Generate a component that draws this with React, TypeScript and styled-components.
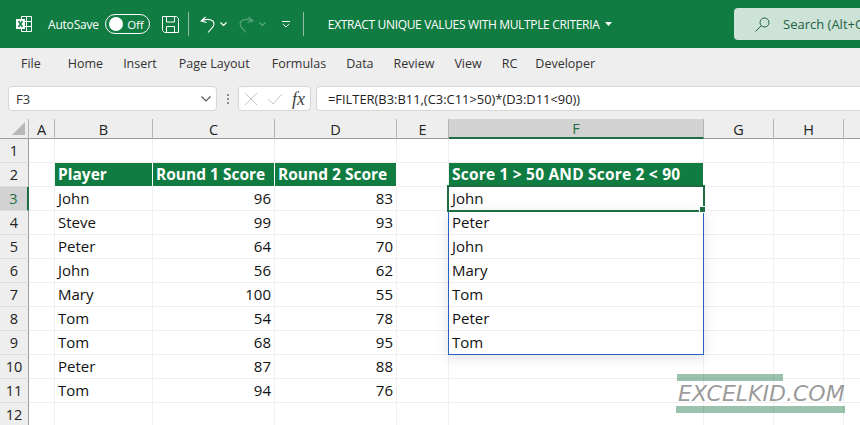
import { createGlobalStyle, styled } from 'styled-components'

const GlobalStyle = createGlobalStyle`
  html,
  body {
    margin: 0;
    padding: 0;
    background: #fff;
  }

  body {
    width: 860px;
    height: 425px;
    overflow: hidden;
    font-family: 'Open Sans', 'Liberation Sans', sans-serif;
  }
`

const Page = styled.div`
  width: 860px;
  height: 425px;
  overflow: hidden;
  position: relative;
  display: flex;
  flex-direction: column;
`

const TitleBar = styled.div`
  height: 48px;
  flex-shrink: 0;
  display: flex;
  align-items: center;
  background: #107c41;
  color: #fff;
  padding-left: 16px;
  font-size: 13px;
  white-space: nowrap;
`

const Gap = styled.span<{ $w: number }>`
  width: ${p => p.$w}px;
  flex-shrink: 0;
`

const AutoSave = styled.span`
  margin-left: 16px;
  font-size: 12px;
  letter-spacing: -0.2px;
`

const Toggle = styled.span`
  width: 45px;
  height: 20px;
  margin-left: 6px;
  padding: 0 5px 0 3px;
  display: flex;
  align-items: center;
  justify-content: space-between;
  box-sizing: border-box;
  border: 1px solid #fff;
  border-radius: 10px;
  font-size: 11.5px;

  &::before {
    content: '';
    width: 14px;
    height: 14px;
    border-radius: 50%;
    background: #fff;
  }
`

const TitleDivider = styled.span`
  width: 1px;
  height: 24px;
  background: #8fc0a5;
`

const DocTitle = styled.span`
  margin-left: 24px;
  font-size: 12px;
  letter-spacing: -0.34px;
`

const SearchBox = styled.div`
  width: 200px;
  height: 32px;
  margin-left: auto;
  margin-right: -74px;
  padding-left: 21px;
  display: flex;
  align-items: center;
  gap: 13px;
  box-sizing: border-box;
  background: #cee3d7;
  border-radius: 4px;
  color: #22613f;
  font-size: 13px;
`

const Ribbon = styled.div`
  height: 38px;
  flex-shrink: 0;
  display: flex;
  align-items: center;
  padding-bottom: 8px;
  box-sizing: border-box;
  background: #eeeeee;
  color: #333;
  font-size: 12.5px;
`

const RibbonTab = styled.span<{ $left: number }>`
  margin-left: ${p => p.$left}px;
`

const FormulaRow = styled.div`
  height: 33px;
  flex-shrink: 0;
  display: flex;
  box-sizing: border-box;
  background: #eeeeee;
`

const FormulaBox = styled.div`
  height: 25px;
  box-sizing: border-box;
  display: flex;
  align-items: center;
  background: #fff;
  border: 1px solid #d6d6d6;
`

const NameBox = styled(FormulaBox)`
  width: 209px;
  margin-left: 8px;
  padding: 0 5px 0 7px;
  justify-content: space-between;
  border-radius: 4px;
  font-size: 13px;
  color: #333;
`

const Dots = styled.div`
  width: 21px;
  height: 25px;
  display: flex;
  flex-direction: column;
  align-items: center;
  justify-content: center;
  gap: 2px;

  span {
    width: 2px;
    height: 2px;
    background: #8c8c8c;
  }
`

const ButtonBox = styled(FormulaBox)`
  width: 73px;
  padding: 0 5px;
  gap: 9px;
  border-radius: 4px;
`

const FxGlyph = styled.span`
  font-family: 'Liberation Serif', serif;
  font-style: italic;
  font-size: 18px;
  line-height: 18px;
  color: #444;
`

const FormulaInput = styled(FormulaBox)`
  flex: 1;
  margin-left: 5px;
  padding-left: 11px;
  border-radius: 4px 0 0 4px;
  border-right: 0;
  font-size: 12.9px;
  color: #222;
  white-space: nowrap;
`

const Sheet = styled.div`
  flex: 1;
  position: relative;
  display: grid;
  grid-template-columns: 29px 26px 98px 122px 122px 52px 255px 70px 70px 17px;
  grid-template-rows: 20px repeat(12, 24px);
  background: #fff;
`

const ColHead = styled.div<{ $active?: boolean }>`
  box-sizing: border-box;
  display: flex;
  align-items: center;
  justify-content: center;
  background: ${p => (p.$active ? '#d2d2d2' : '#eeeeee')};
  border-right: 1px solid #b4b4b4;
  border-bottom: ${p => (p.$active ? '2px solid #1f6e43' : '1px solid #9c9c9c')};
  color: ${p => (p.$active ? '#1f6e43' : '#222')};
  font-size: 14.5px;
  padding-top: 1px;
`

const Corner = styled(ColHead)`
  position: relative;
  background: #eeeeee;

  svg {
    position: absolute;
    right: 3px;
    bottom: 3px;
  }
`

const RowHead = styled.div<{ $active?: boolean }>`
  box-sizing: border-box;
  display: flex;
  align-items: center;
  justify-content: center;
  background: ${p => (p.$active ? '#d2d2d2' : '#eeeeee')};
  border-right: ${p => (p.$active ? '2px solid #1f6e43' : '1px solid #9c9c9c')};
  border-bottom: 1px solid #dcdcdc;
  color: ${p => (p.$active ? '#1f6e43' : '#222')};
  font-size: 14.5px;
`

const Cell = styled.div<{ $right?: boolean }>`
  box-sizing: border-box;
  display: flex;
  align-items: center;
  justify-content: ${p => (p.$right ? 'flex-end' : 'flex-start')};
  padding: 0 3px 2px;
  border-right: 1px solid #efefef;
  border-bottom: 1px solid #efefef;
  color: #111;
  font-size: 15px;
  white-space: nowrap;
`

const HeaderCell = styled(Cell)`
  background: #107c41;
  border-right: 1px solid #fff;
  border-bottom: 1px solid #fff;
  color: #fff;
  font-size: 15.5px;
  font-weight: 700;
`

const CriteriaHeader = styled(HeaderCell)`
  letter-spacing: 0.2px;
`

const SpillRange = styled.div`
  position: absolute;
  left: 448px;
  top: 91px;
  width: 256px;
  height: 145px;
  box-sizing: border-box;
  border: 1px solid #2a62c4;
  box-shadow: 0 3px 12px rgba(0, 0, 0, 0.12);
  pointer-events: none;
`

const ActiveCell = styled.div`
  position: absolute;
  left: 447px;
  top: 66px;
  width: 258px;
  height: 27px;
  box-sizing: border-box;
  border: 2px solid #1f6e43;

  &::after {
    content: '';
    position: absolute;
    right: -3px;
    bottom: -3px;
    width: 5px;
    height: 5px;
    background: #1f6e43;
    border: 1px solid #fff;
  }
`

const Watermark = styled.div`
  position: absolute;
  left: 676px;
  top: 374px;
  width: 169px;
  display: flex;
  flex-direction: column;
  color: rgba(110, 110, 110, 0.7);
`

const WatermarkBar = styled.div<{ $width: number }>`
  width: ${p => p.$width}px;
  height: 7px;
  background: rgba(16, 110, 60, 0.42);
  margin-left: ${p => (p.$width < 169 ? 1 : 0)}px;
`

const WatermarkText = styled.div`
  height: 25px;
  line-height: 25px;
  padding-left: 2px;
  font-family: 'DejaVu Sans', sans-serif;
  font-style: italic;
  font-size: 22px;
  white-space: nowrap;
`

const CaretIcon = styled.svg<{ $left: number }>`
  margin-left: ${p => p.$left}px;
`

const columns = ['A', 'B', 'C', 'D', 'E', 'F', 'G', 'H', '']

const players: [string, number, number][] = [
  ['John', 96, 83],
  ['Steve', 99, 93],
  ['Peter', 64, 70],
  ['John', 56, 62],
  ['Mary', 100, 55],
  ['Tom', 54, 78],
  ['Tom', 68, 95],
  ['Peter', 87, 88],
  ['Tom', 94, 76],
]

const filtered = ['John', 'Peter', 'John', 'Mary', 'Tom', 'Peter', 'Tom']

const tabs: [string, number][] = [
  ['File', 21],
  ['Home', 27],
  ['Insert', 20],
  ['Page Layout', 22],
  ['Formulas', 22],
  ['Data', 20],
  ['Review', 20],
  ['View', 20],
  ['RC', 20],
  ['Developer', 18],
]

const ExcelIcon = () => (
  <svg width="16" height="16" viewBox="0 0 16 16">
    <path d="M5.500 .5h10v15h-10zM5.500 5.500h10M5.500 10.500h10M10.500 .5v15" fill="none" stroke="#fff" />
    <rect x="0" y="3" width="9" height="10" fill="#fff" />
    <path d="M2.500 5l4 6M6.500 5l-4 6" stroke="#107c41" strokeWidth="1.400" />
  </svg>
)

const SaveIcon = () => (
  <svg width="17" height="17" viewBox="0 0 17 17" fill="none" stroke="#fff">
    <path d="M.5 .5h14l2 2v14h-14l-2-2z" />
    <path d="M4.500 .5v5.500h8v-5.500M4.500 16.500v-6h8v6" />
  </svg>
)

const UndoIcon = ({ color }: { color: string }) => (
  <svg width="15" height="17" viewBox="0 0 15 17" fill="none" stroke={color} strokeWidth="1.100">
    <path d="M5.500 1L1 5l5.500 1.500M1 5c3-1.500 7-2 10-1 4 1.500 3.500 5.500 1 8l-4 4.500" />
  </svg>
)

const RedoIcon = ({ color }: { color: string }) => (
  <svg width="15" height="17" viewBox="0 0 15 17" fill="none" stroke={color} strokeWidth="1.100">
    <path d="M9.500 1L14 5 8.500 6.500M14 5c-3-1.500-7-2-10-1-4 1.500-3.500 5.500-1 8l4 4.500" />
  </svg>
)

const Caret = ({ color, left = 5 }: { color: string; left?: number }) => (
  <CaretIcon $left={left} width="7" height="4" viewBox="0 0 7 4" fill="none" stroke={color} strokeWidth="1.200">
    <path d="M.5 .5l3 3 3-3" />
  </CaretIcon>
)

const App = () => {
  return (
    <Page>
      <GlobalStyle />
      <TitleBar>
        <ExcelIcon />
        <AutoSave>AutoSave</AutoSave>
        <Toggle>Off</Toggle>
        <Gap $w={12} />
        <SaveIcon />
        <Gap $w={9} />
        <TitleDivider />
        <Gap $w={11} />
        <UndoIcon color="#fff" />
        <Caret color="#fff" />
        <Gap $w={12} />
        <RedoIcon color="#5aa67c" />
        <Caret color="#5aa67c" />
        <Gap $w={16} />
        <svg width="8" height="7" viewBox="0 0 8 7" fill="none" stroke="#fff">
          <path d="M0 .5h8M.8 3l3.200 3 3.200-3" />
        </svg>
        <Gap $w={13} />
        <TitleDivider />
        <DocTitle>EXTRACT UNIQUE VALUES WITH MULTPLE CRITERIA</DocTitle>
        <CaretIcon $left={6} width="7" height="4" viewBox="0 0 7 4" fill="#fff">
          <path d="M0 0h7L3.500 4z" />
        </CaretIcon>
        <SearchBox>
          <svg width="15" height="15" viewBox="0 0 15 15" fill="none" stroke="#22613f">
            <circle cx="9.500" cy="5.500" r="4.500" />
            <path d="M6 9l-5.500 5.500" />
          </svg>
          Search (Alt+Q)
        </SearchBox>
      </TitleBar>

      <Ribbon>
        {tabs.map(([name, left]) => (
          <RibbonTab key={name} $left={left}>
            {name}
          </RibbonTab>
        ))}
      </Ribbon>

      <FormulaRow>
        <NameBox>
          F3
          <svg width="10" height="6" viewBox="0 0 10 6" fill="none" stroke="#555" strokeWidth="1.100">
            <path d="M.5 .5L5 5 9.500 .5" />
          </svg>
        </NameBox>
        <Dots>
          <span />
          <span />
          <span />
        </Dots>
        <ButtonBox>
          <svg width="14" height="14" viewBox="0 0 14 14" stroke="#c4c4c4" fill="none">
            <path d="M1 1l12 12M13 1L1 13" />
          </svg>
          <svg width="16" height="12" viewBox="0 0 16 12" stroke="#c4c4c4" fill="none">
            <path d="M1 6l5 5L15 1" />
          </svg>
          <FxGlyph>fx</FxGlyph>
        </ButtonBox>
        <FormulaInput>=FILTER(B3:B11,(C3:C11&gt;50)*(D3:D11&lt;90))</FormulaInput>
      </FormulaRow>

      <Sheet>
        <Corner>
          <svg width="13" height="13" viewBox="0 0 13 13">
            <path d="M13 0v13H0z" fill="#b8b8b8" />
          </svg>
        </Corner>
        {columns.map(col => (
          <ColHead key={col} $active={col === 'F'}>
            {col}
          </ColHead>
        ))}

        {Array.from({ length: 12 }, (_, index) => {
          const row = index + 1
          const player = row >= 3 && row <= 11 ? players[row - 3] : null
          const result = row >= 3 && row <= 9 ? filtered[row - 3] : ''
          return [
            <RowHead key={`r${row}`} $active={row === 3}>
              {row}
            </RowHead>,
            <Cell key={`a${row}`} />,
            row === 2 ? (
              <HeaderCell key="b2">Player</HeaderCell>
            ) : (
              <Cell key={`b${row}`}>{player?.[0]}</Cell>
            ),
            row === 2 ? (
              <HeaderCell key="c2">Round 1 Score</HeaderCell>
            ) : (
              <Cell key={`c${row}`} $right>
                {player?.[1]}
              </Cell>
            ),
            row === 2 ? (
              <HeaderCell key="d2">Round 2 Score</HeaderCell>
            ) : (
              <Cell key={`d${row}`} $right>
                {player?.[2]}
              </Cell>
            ),
            <Cell key={`e${row}`} />,
            row === 2 ? (
              <CriteriaHeader key="f2">Score 1 &gt; 50 AND Score 2 &lt; 90</CriteriaHeader>
            ) : (
              <Cell key={`f${row}`}>{result}</Cell>
            ),
            <Cell key={`g${row}`} />,
            <Cell key={`h${row}`} />,
            <Cell key={`i${row}`} />,
          ]
        })}

        <SpillRange />
        <ActiveCell />
      </Sheet>

      <Watermark>
        <WatermarkBar $width={106} />
        <WatermarkText>EXCELKID.COM</WatermarkText>
        <WatermarkBar $width={169} />
      </Watermark>
    </Page>
  )
}

export default App
